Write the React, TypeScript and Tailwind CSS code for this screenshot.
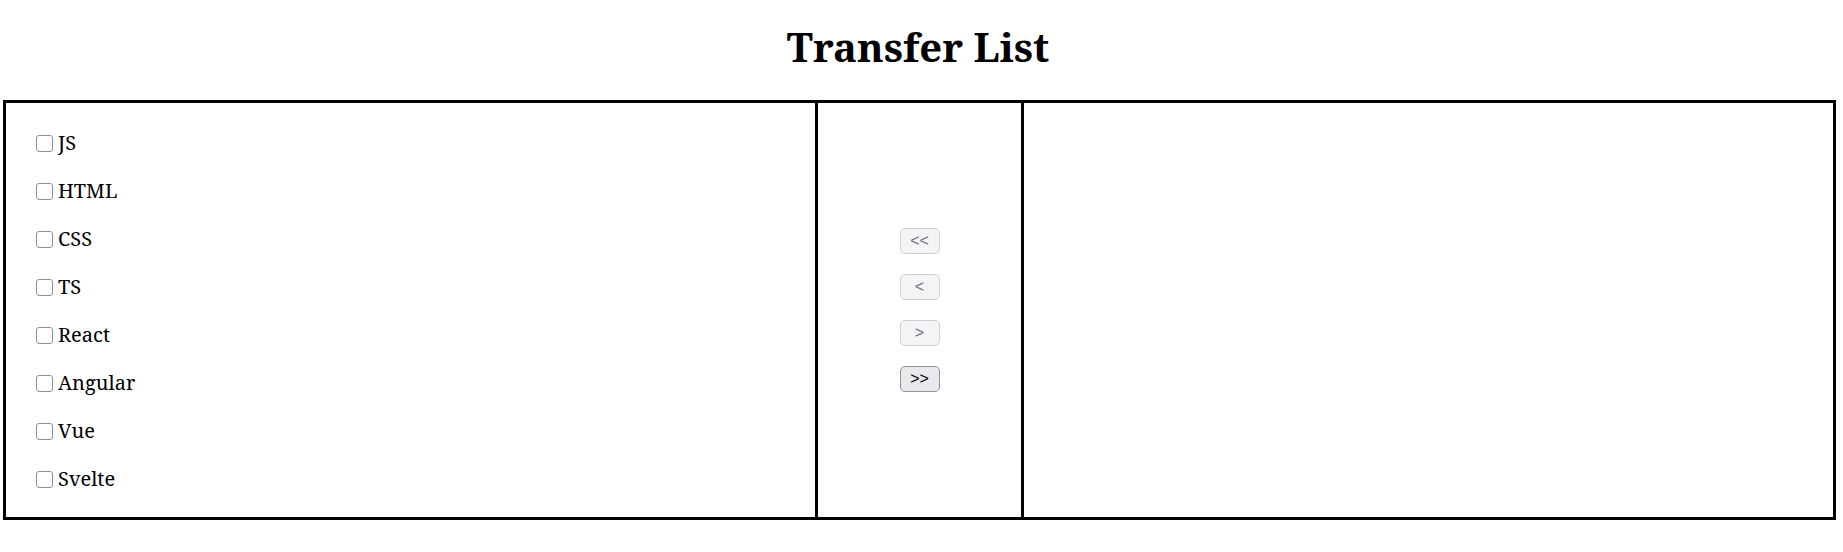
import { useState } from "react";

const initialLeft = ["JS", "HTML", "CSS", "TS", "React", "Angular", "Vue", "Svelte"];

function ArrowButton({ label, disabled, onClick }: { label: string; disabled: boolean; onClick: () => void }) {
  return (
    <button
      disabled={disabled}
      onClick={onClick}
      className={
        disabled
          ? "flex h-[26px] w-[40px] items-center justify-center rounded-[5px] border border-[#cfcfd8] bg-[#f4f4f6] font-['Liberation_Sans',sans-serif] text-[16px] leading-none text-[#6f6f78]"
          : "flex h-[26px] w-[40px] items-center justify-center rounded-[5px] border border-[#8f8f9d] bg-[#e9e9ed] font-['Liberation_Sans',sans-serif] text-[16px] leading-none text-black"
      }
    >
      {label}
    </button>
  );
}

function ItemList({ items, checked, toggle }: { items: string[]; checked: string[]; toggle: (s: string) => void }) {
  return (
    <div className="flex flex-1 flex-col justify-center gap-5 pl-[30px] pt-[2px]">
      {items.map((item) => (
        <label key={item} className="flex h-[28px] items-center">
          <input
            type="checkbox"
            checked={checked.includes(item)}
            onChange={() => toggle(item)}
            className="m-0 mr-[5px] h-[17px] w-[17px] appearance-none rounded-[3px] border border-[#8f8f9d] bg-white checked:bg-blue-600"
          />
          <span className="text-[20px] leading-[28px]">{item}</span>
        </label>
      ))}
    </div>
  );
}

export default function App() {
  const [left, setLeft] = useState<string[]>(initialLeft);
  const [right, setRight] = useState<string[]>([]);
  const [checked, setChecked] = useState<string[]>([]);

  const toggle = (s: string) =>
    setChecked((c) => (c.includes(s) ? c.filter((x) => x !== s) : [...c, s]));

  const leftChecked = left.filter((x) => checked.includes(x));
  const rightChecked = right.filter((x) => checked.includes(x));

  return (
    <div className="min-h-screen bg-white font-['Noto_Serif','DejaVu_Serif',serif] text-black">
      {/* Title */}
      <div className="flex h-[100px] items-center justify-center pb-[6px] pl-[3px] pr-[10px]">
        <h1 className="text-[40px] font-bold">Transfer List</h1>
      </div>

      {/* Panels */}
      <div className="ml-[3px] flex h-[420px] w-[1833px] border-[3px] border-black">
        <ItemList items={left} checked={checked} toggle={toggle} />

        <div className="flex w-[209px] flex-col items-center justify-center gap-[20px] border-x-[3px] border-black">
          <ArrowButton
            label="<<"
            disabled={right.length === 0}
            onClick={() => {
              setLeft([...left, ...right]);
              setRight([]);
            }}
          />
          <ArrowButton
            label="<"
            disabled={rightChecked.length === 0}
            onClick={() => {
              setLeft([...left, ...rightChecked]);
              setRight(right.filter((x) => !rightChecked.includes(x)));
              setChecked(checked.filter((x) => !rightChecked.includes(x)));
            }}
          />
          <ArrowButton
            label=">"
            disabled={leftChecked.length === 0}
            onClick={() => {
              setRight([...right, ...leftChecked]);
              setLeft(left.filter((x) => !leftChecked.includes(x)));
              setChecked(checked.filter((x) => !leftChecked.includes(x)));
            }}
          />
          <ArrowButton
            label=">>"
            disabled={left.length === 0}
            onClick={() => {
              setRight([...right, ...left]);
              setLeft([]);
            }}
          />
        </div>

        <ItemList items={right} checked={checked} toggle={toggle} />
      </div>
    </div>
  );
}
